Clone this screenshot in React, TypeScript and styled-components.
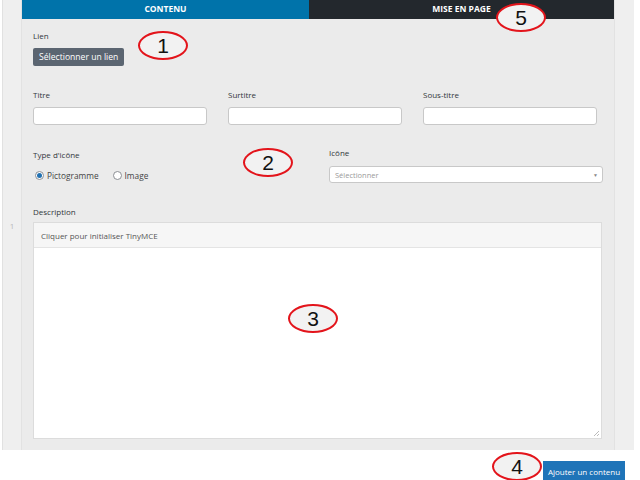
import React from "react";
import styled, { createGlobalStyle } from "styled-components";

const Global = createGlobalStyle`
  html, body { margin: 0; padding: 0; background: #ffffff; }
  body { font-family: "Open Sans", "Liberation Sans", sans-serif; width: 640px; height: 480px; overflow: hidden; }
`;

const Page = styled.div`
  position: relative;
  width: 640px;
  height: 480px;
  padding-left: 2px;
  box-sizing: border-box;
`;

const Box = styled.div`
  display: grid;
  grid-template-columns: 19px 592px 20px;
  width: 632px;
  height: 450px;
  box-sizing: border-box;
  border: 1px solid #e1e1e1;
  border-top: none;
  background: #eeeeee;
`;

const Gutter = styled.div<{ $side: "left" | "right" }>`
  background: #efefef;
  ${(p) => (p.$side === "left" ? "border-right: 1px solid #e2e2e2;" : "border-left: 1px solid #e2e2e2;")}
  display: flex;
  align-items: center;
  justify-content: center;
  font-size: 8px;
  color: #b9b9b9;
`;

const Main = styled.div`
  display: flex;
  flex-direction: column;
  background: #ebebeb;
`;

const Tabs = styled.div`
  display: grid;
  grid-template-columns: 287px 1fr;
  height: 19px;
`;

const Tab = styled.div<{ $active?: boolean }>`
  background: ${(p) => (p.$active ? "#0073aa" : "#23282d")};
  color: #ffffff;
  font-size: 8.5px;
  font-weight: 700;
  display: flex;
  align-items: center;
  justify-content: center;
  padding-bottom: 2px;
  box-sizing: border-box;
`;

const Form = styled.div`
  display: flex;
  flex-direction: column;
  padding: 12px 12px 11px 11px;
  flex: 1;
  min-height: 0;
`;

const Field = styled.div<{ $top?: number }>`
  display: flex;
  flex-direction: column;
  margin-top: ${(p) => p.$top ?? 0}px;
`;

const Label = styled.label<{ $gap?: number }>`
  display: block;
  font-size: 8px;
  line-height: 10px;
  color: #32373c;
  margin-bottom: ${(p) => p.$gap ?? 7}px;
`;

const GrayButton = styled.button`
  align-self: flex-start;
  height: 18px;
  padding: 0 6px;
  border: none;
  border-radius: 2px;
  background: #5b6571;
  color: #ffffff;
  font-family: inherit;
  font-size: 8.6px;
  line-height: 18px;
`;

const ThreeCols = styled.div`
  display: grid;
  grid-template-columns: repeat(3, 174px);
  column-gap: 21px;
  margin-top: 24px;
`;

const TwoCols = styled.div`
  display: grid;
  grid-template-columns: 274px 274px;
  column-gap: 22px;
  margin-top: 23px;
  align-items: start;
`;

const TextInput = styled.div`
  height: 18px;
  box-sizing: border-box;
  background: #ffffff;
  border: 1px solid #c8c8c8;
  border-radius: 3px;
`;

const RadioRow = styled.div`
  display: flex;
  align-items: center;
  gap: 12px;
  height: 10px;
  margin-top: 3px;
`;

const RadioItem = styled.span`
  display: inline-flex;
  align-items: center;
  gap: 3px;
  font-size: 8.3px;
  color: #444;
`;

const RadioDot = styled.span<{ $checked?: boolean }>`
  width: 9px;
  height: 9px;
  box-sizing: border-box;
  border-radius: 50%;
  border: 1px solid #8c8f94;
  background: #ffffff;
  display: inline-flex;
  align-items: center;
  justify-content: center;
  margin-left: 2px;
  &::after {
    content: "";
    width: 5px;
    height: 5px;
    border-radius: 50%;
    background: ${(p) => (p.$checked ? "#2271b1" : "transparent")};
  }
`;

const Select = styled.div`
  height: 17px;
  box-sizing: border-box;
  background: #ffffff;
  border: 1px solid #c8c8c8;
  border-radius: 3px;
  display: flex;
  align-items: center;
  justify-content: space-between;
  padding: 0 4px 0 5px;
  font-size: 7.5px;
  color: #9a9a9a;
`;

const Caret = styled.span`
  font-size: 5px;
  color: #888;
`;

const Editor = styled.div`
  display: flex;
  flex-direction: column;
  height: 217px;
  box-sizing: border-box;
  border: 1px solid #dcdcdc;
  background: #ffffff;
  position: relative;
`;

const EditorHead = styled.div`
  height: 25px;
  box-sizing: border-box;
  background: #f6f6f6;
  border-bottom: 1px solid #e4e4e4;
  display: flex;
  align-items: center;
  padding-left: 7px;
  font-size: 8px;
  color: #555;
`;

const Grip = styled.svg`
  position: absolute;
  right: 1px;
  bottom: 1px;
`;

const Footer = styled.div`
  display: flex;
  justify-content: flex-end;
  padding-right: 15px;
  margin-top: 11px;
`;

const BlueButton = styled.button`
  height: 20px;
  padding: 0 4px;
  width: 82px;
  border: none;
  background: #1f74b8;
  color: #ffffff;
  font-family: inherit;
  font-size: 8px;
  white-space: nowrap;
`;

const Ellipse = styled.div<{ $x: number; $y: number }>`
  position: absolute;
  left: ${(p) => p.$x - 25}px;
  top: ${(p) => p.$y - 14}px;
  width: 50px;
  height: 29px;
  box-sizing: border-box;
  border: 2px solid #e3141b;
  border-radius: 50%;
  background: #f2f2f2;
  display: flex;
  align-items: center;
  justify-content: center;
  font-family: "Liberation Sans", Arial, sans-serif;
  font-size: 21px;
  color: #111;
  line-height: 1;
`;

export default function App() {
  return (
    <Page>
      <Global />
      <Box>
        <Gutter $side="left">1</Gutter>
        <Main>
          <Tabs>
            <Tab $active>CONTENU</Tab>
            <Tab>MISE EN PAGE</Tab>
          </Tabs>
          <Form>
            <Field>
              <Label>Lien</Label>
              <GrayButton>Sélectionner un lien</GrayButton>
            </Field>
            <ThreeCols>
              <Field>
                <Label>Titre</Label>
                <TextInput />
              </Field>
              <Field>
                <Label>Surtitre</Label>
                <TextInput />
              </Field>
              <Field>
                <Label>Sous-titre</Label>
                <TextInput />
              </Field>
            </ThreeCols>
            <TwoCols>
              <Field $top={2}>
                <Label $gap={7}>Type d'icône</Label>
                <RadioRow>
                  <RadioItem>
                    <RadioDot $checked />
                    Pictogramme
                  </RadioItem>
                  <RadioItem>
                    <RadioDot />
                    Image
                  </RadioItem>
                </RadioRow>
              </Field>
              <Field>
                <Label $gap={8}>Icône</Label>
                <Select>
                  Sélectionner
                  <Caret>▼</Caret>
                </Select>
              </Field>
            </TwoCols>
            <Field $top={24}>
              <Label $gap={5}>Description</Label>
              <Editor>
                <EditorHead>Cliquer pour initialiser TinyMCE</EditorHead>
                <Grip width="7" height="7" viewBox="0 0 7 7">
                  <path d="M1 6 L6 1 M4 6 L6 4" stroke="#aaa" strokeWidth="0.8" fill="none" />
                </Grip>
              </Editor>
            </Field>
          </Form>
        </Main>
        <Gutter $side="right" />
      </Box>
      <Footer>
        <BlueButton>Ajouter un contenu</BlueButton>
      </Footer>
      <Ellipse $x={163} $y={45}>1</Ellipse>
      <Ellipse $x={268} $y={162}>2</Ellipse>
      <Ellipse $x={313} $y={318}>3</Ellipse>
      <Ellipse $x={517} $y={466}>4</Ellipse>
      <Ellipse $x={521} $y={17}>5</Ellipse>
    </Page>
  );
}
